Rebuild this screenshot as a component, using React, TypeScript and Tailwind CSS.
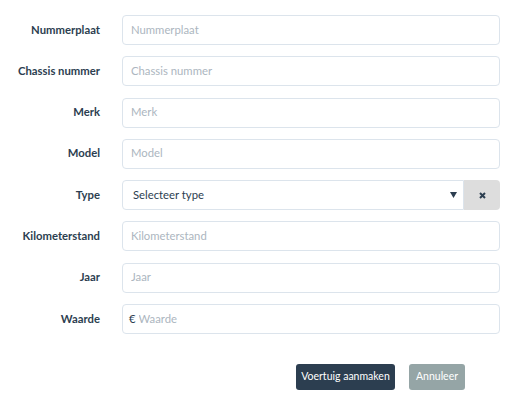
import React from 'react';

const fields: { label: string; placeholder: string; prefix?: string }[] = [
  { label: 'Nummerplaat', placeholder: 'Nummerplaat' },
  { label: 'Chassis nummer', placeholder: 'Chassis nummer' },
  { label: 'Merk', placeholder: 'Merk' },
  { label: 'Model', placeholder: 'Model' },
];

const fields2: { label: string; placeholder: string; prefix?: string }[] = [
  { label: 'Kilometerstand', placeholder: 'Kilometerstand' },
  { label: 'Jaar', placeholder: 'Jaar' },
  { label: 'Waarde', placeholder: 'Waarde', prefix: '€' },
];

const labelClass = 'w-[100px] text-right text-[11.3px] font-bold text-[#2c3e50]';
const boxClass =
  'ml-[22px] w-[378px] h-[30px] border border-[#dce4ec] rounded-[4px] bg-white flex items-center text-[11.3px]';

const Row: React.FC<{ label: string; placeholder: string; prefix?: string }> = ({ label, placeholder, prefix }) => (
  <div className="flex items-center h-[30px]">
    <label className={labelClass}>{label}</label>
    <div className={boxClass + (prefix ? ' pl-[6px] pr-[8px]' : ' px-[8px]')}>
      {prefix && <span className="text-[#2c3e50] mr-[3px]">{prefix}</span>}
      <input
        type="text"
        placeholder={placeholder}
        className="flex-1 min-w-0 bg-transparent outline-none text-[#2c3e50] placeholder:text-[#acb6c0]"
      />
    </div>
  </div>
);

export default function App() {
  return (
    <div className="w-[513px] h-[415px] bg-white pt-[15px]" style={{ fontFamily: 'Lato, "Open Sans", sans-serif' }}>
      <div className="flex flex-col gap-[11.3px]">
        {fields.map(f => (
          <Row key={f.label} {...f} />
        ))}
        <div className="flex items-center h-[30px]">
          <label className={labelClass}>Type</label>
          <div className="ml-[22px] w-[378px] h-[30px] flex">
            <div className="flex-1 h-full border border-[#dce4ec] rounded-l-[4px] bg-white flex items-center pl-[10px] pr-[6px] text-[11.3px] text-[#2c3e50]">
              <span className="flex-1">Selecteer type</span>
              <svg width="7" height="6" viewBox="0 0 7 6">
                <path d="M0 0 L7 0 L3.5 6 Z" fill="#2c3e50" />
              </svg>
            </div>
            <button className="w-[36px] h-full bg-[#dddddd] rounded-r-[4px] flex items-center justify-center">
              <svg width="7" height="7" viewBox="0 0 7 7">
                <path d="M1 1 L6 6 M6 1 L1 6" stroke="#2c3e50" strokeWidth="2" strokeLinecap="butt" />
              </svg>
            </button>
          </div>
        </div>
        {fields2.map(f => (
          <Row key={f.label} {...f} />
        ))}
      </div>
      <div className="flex mt-[30px] ml-[296px] gap-[14px]">
        <button className="w-[99px] h-[26px] bg-[#2c3e50] text-white text-[10.5px] whitespace-nowrap rounded-[3px]">Voertuig aanmaken</button>
        <button className="w-[56px] h-[26px] bg-[#95a5a6] text-white text-[10.5px] whitespace-nowrap rounded-[3px]">Annuleer</button>
      </div>
    </div>
  );
}
